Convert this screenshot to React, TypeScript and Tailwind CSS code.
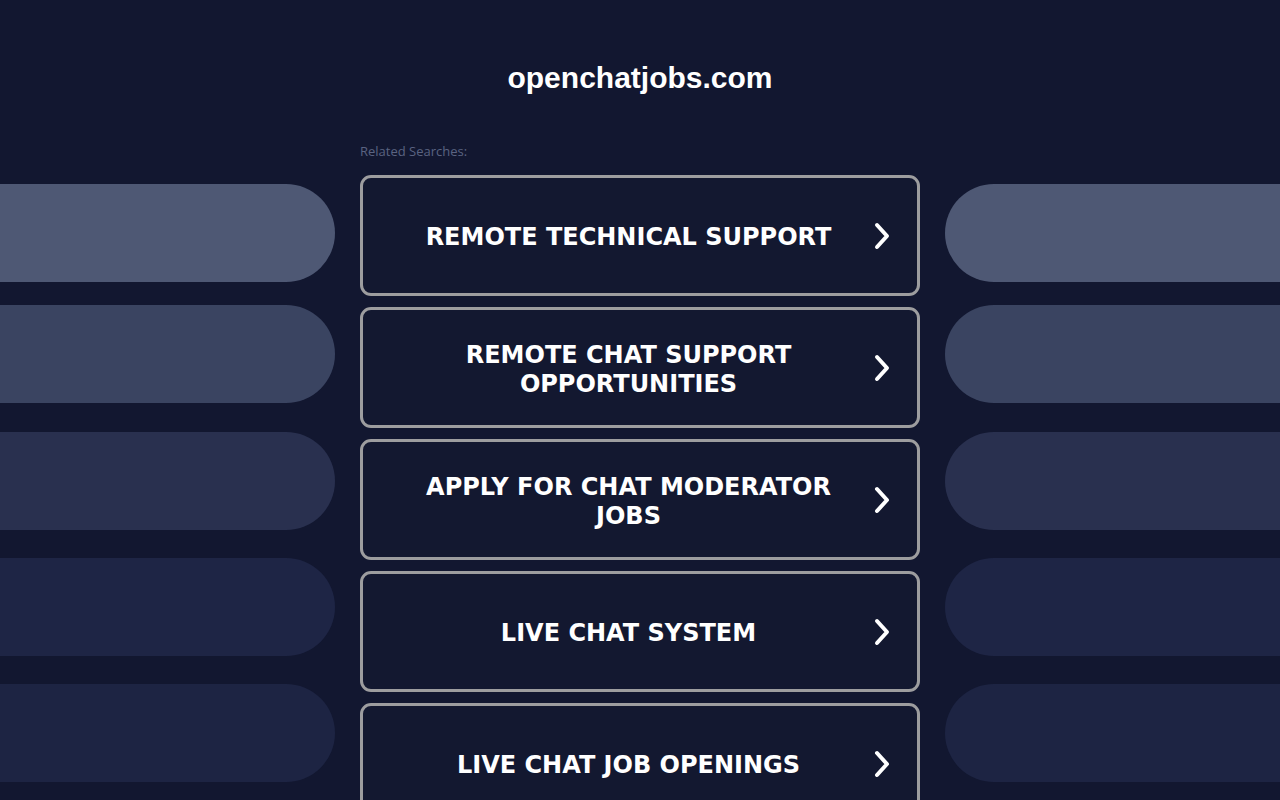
import React from "react";

const items = [
  "REMOTE TECHNICAL SUPPORT",
  "REMOTE CHAT SUPPORT OPPORTUNITIES",
  "APPLY FOR CHAT MODERATOR JOBS",
  "LIVE CHAT SYSTEM",
  "LIVE CHAT JOB OPENINGS",
];

const pills = [
  { cls: "bg-[#4e5874]", mt: "mt-0" },
  { cls: "bg-[#3a4461]", mt: "mt-[23px]" },
  { cls: "bg-[#29304f]", mt: "mt-[29px]" },
  { cls: "bg-[#1e2545]", mt: "mt-[28px]" },
  { cls: "bg-[#1d2443]", mt: "mt-[28px]" },
];

function Chevron() {
  return (
    <svg width="16" height="28" viewBox="0 0 16 28" className="shrink-0">
      <polyline
        points="3,3 13,14 3,25"
        fill="none"
        stroke="white"
        strokeWidth="4"
        strokeLinecap="round"
        strokeLinejoin="round"
      />
    </svg>
  );
}

export default function App() {
  return (
    <div className="h-[800px] w-[1280px] overflow-hidden bg-[#121730] flex">
      <div className="w-[335px] shrink-0 pt-[184px] flex flex-col">
        {pills.map((p, i) => (
          <div key={i} className={`h-[98px] w-full shrink-0 rounded-r-[49px] ${p.cls} ${p.mt}`} />
        ))}
      </div>
      <div className="w-[25px] shrink-0" />
      <div className="w-[560px] shrink-0 flex flex-col">
        <div className="pt-[60px] text-center text-white font-bold text-[30px] leading-[36px] font-['Liberation_Sans',Arial,sans-serif]">
          openchatjobs.com
        </div>
        <div className="mt-[47px] text-[13px] leading-[17px] text-[#5a6381] font-['Open_Sans','Liberation_Sans',sans-serif]">
          Related Searches:
        </div>
        <div className="mt-[15px] flex flex-col gap-[11px]">
          {items.map((t) => (
            <div
              key={t}
              className="h-[121px] shrink-0 rounded-[11px] border-[3px] border-[#9d9d9f] bg-[#131830] flex items-center pl-[45px] pr-[27px] gap-[25px]"
            >
              <div className="flex-1 pt-[4px] text-center text-white font-bold text-[24px] leading-[29px] font-['DejaVu_Sans',Verdana,sans-serif]">
                {t}
              </div>
              <Chevron />
            </div>
          ))}
        </div>
      </div>
      <div className="w-[25px] shrink-0" />
      <div className="w-[335px] shrink-0 pt-[184px] flex flex-col">
        {pills.map((p, i) => (
          <div key={i} className={`h-[98px] w-full shrink-0 rounded-l-[49px] ${p.cls} ${p.mt}`} />
        ))}
      </div>
    </div>
  );
}
